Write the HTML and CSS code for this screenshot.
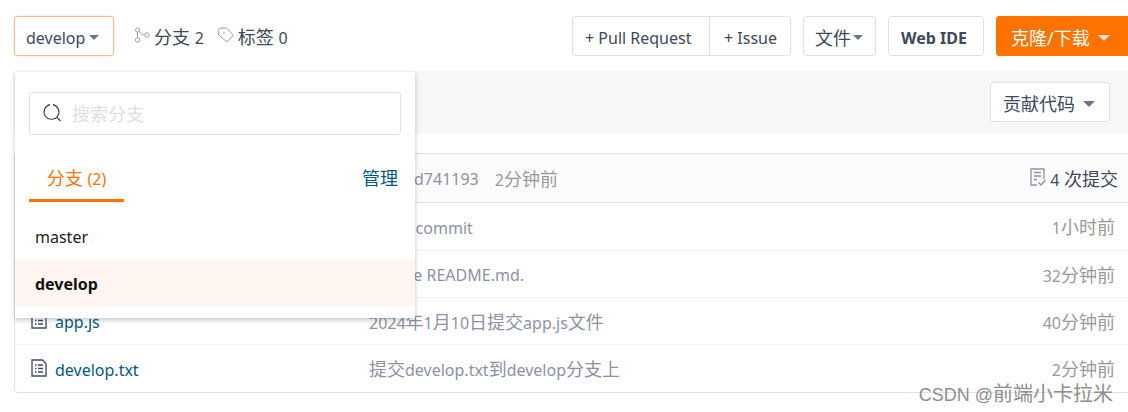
FILE: index.html
```html
<!DOCTYPE html>
<html lang="zh-CN">
<head>
<meta charset="utf-8">
<title>develop 分支</title>
<link rel="stylesheet" href="styles.css">
</head>
<body>
<main class="repo">
  <header class="toolbar">
    <div class="branch-picker">
      <button class="btn btn-branch" type="button" aria-expanded="true"><span class="latin">develop</span><span class="caret"></span></button>
      <section class="branch-menu" aria-label="选择分支">
        <div class="search">
          <svg class="search-icon" viewBox="0 0 20 20" aria-hidden="true"><path d="M8 1.600A7.400 7.400 0 1 0 11 1.600M14.500 14L18.500 18"/></svg>
          <input class="search-input" type="text" placeholder="搜索分支" aria-label="搜索分支">
        </div>
        <div class="menu-tabs">
          <button class="tab" type="button">分支 <span class="latin">(2)</span></button>
          <a class="manage" href="#">管理</a>
        </div>
        <ul class="branch-list">
          <li><a class="branch" href="#">master</a></li>
          <li><a class="branch branch-current" href="#">develop</a></li>
        </ul>
      </section>
    </div>
    <nav class="refs">
      <a class="ref" href="#"><svg class="ref-icon" viewBox="0 0 16 16" aria-hidden="true"><circle cx="3.5" cy="3" r="2"/><circle cx="3.5" cy="13" r="2.2"/><circle cx="13" cy="8" r="2.2"/><path d="M3.5 5v5.800M5 4.400c2 2 3 3.400 5.800 3.600"/></svg><span>分支 <span class="latin">2</span></span></a>
      <a class="ref" href="#"><svg class="ref-icon" viewBox="0 0 16 16" aria-hidden="true"><path d="M.7 3.300Q.7 1 3 1H8.500L15.300 8.200 9 15 .7 8z"/><circle class="dot" cx="6" cy="6" r=".8"/></svg><span>标签 <span class="latin">0</span></span></a>
    </nav>
    <div class="actions">
      <div class="btn-group">
        <button class="btn btn-pull latin" type="button">+ Pull Request</button>
        <button class="btn btn-issue latin" type="button">+ Issue</button>
      </div>
      <button class="btn btn-file" type="button">文件<span class="caret"></span></button>
      <button class="btn btn-ide latin" type="button">Web IDE</button>
      <button class="btn btn-clone" type="button">克隆/下载<span class="caret"></span></button>
    </div>
  </header>

  <div class="contribute-bar">
    <button class="btn btn-contribute" type="button">贡献代码<span class="caret"></span></button>
  </div>

  <section class="files">
    <div class="last-commit">
      <a class="hash latin" href="#">d741193</a>
      <span class="ago"><span class="latin">2</span>分钟前</span>
      <a class="commits" href="#"><svg class="commits-icon" viewBox="0 0 16 18" aria-hidden="true"><path d="M7 17H1V1H14V11M4 4.500h7M4 8h7M4 11.500h3M8.500 14.500l2.500 2.500 4.500-5"/></svg><span><span class="latin">4</span> 次提交</span></a>
    </div>
    <table class="file-table">
      <tbody>
        <tr><td class="name"></td><td class="message latin">Initial commit</td><td class="time"><span class="latin">1</span>小时前</td></tr>
        <tr><td class="name"></td><td class="message latin">update README.md.</td><td class="time"><span class="latin">32</span>分钟前</td></tr>
        <tr>
          <td class="name"><a class="file latin" href="#"><svg class="file-icon" viewBox="0 0 16 18" aria-hidden="true"><path d="M1 1H11.500L15 4.500V17H1zM4 6h1.500M4 9.500h1.500M4 13h1.500M7 6h5M7 9.500h5M7 13h5"/></svg>app.js</a></td>
          <td class="message"><span class="latin">2024</span>年<span class="latin">1</span>月<span class="latin">10</span>日提交<span class="latin">app.js</span>文件</td>
          <td class="time"><span class="latin">40</span>分钟前</td>
        </tr>
        <tr>
          <td class="name"><a class="file latin" href="#"><svg class="file-icon" viewBox="0 0 16 18" aria-hidden="true"><path d="M1 1H11.500L15 4.500V17H1zM4 6h1.500M4 9.500h1.500M4 13h1.500M7 6h5M7 9.500h5M7 13h5"/></svg>develop.txt</a></td>
          <td class="message">提交<span class="latin">develop.txt</span>到<span class="latin">develop</span>分支上</td>
          <td class="time"><span class="latin">2</span>分钟前</td>
        </tr>
      </tbody>
    </table>
    <div class="watermark"><span class="watermark-site">CSDN @</span>前端小卡拉米</div>
  </section>
</main>
</body>
</html>
```
FILE: styles.css
```css
* { box-sizing: border-box; }

body {
  margin: 0;
  background: #fff;
  color: #40485b;
  font: 18px/24px "Noto Sans", "Noto Sans CJK SC", sans-serif;
  font-weight: 400;
}

a { color: inherit; text-decoration: none; }
button, input { font: inherit; color: inherit; }
svg { fill: none; stroke: currentColor; flex: none; }

.latin { font-size: 16px; }

.repo { padding: 16px 0 16px 14px; }

.toolbar { display: flex; align-items: center; }

.btn {
  display: inline-flex;
  align-items: center;
  height: 40px;
  padding: 3px 12px 0;
  border: 1px solid #dce3e8;
  border-radius: 3px;
  background: #fff;
  white-space: nowrap;
}

.caret {
  margin-left: 4px;
  border: 5px solid transparent;
  border-top: 5px solid #6b7489;
  border-bottom: 0;
}

.branch-picker { position: relative; }

.btn-branch {
  width: 100px;
  padding: 3px 11px 0;
  border-color: #ffb980;
  box-shadow: 0 0 3px #dce3e8;
}

.branch-menu {
  position: absolute;
  z-index: 2;
  top: 56px;
  left: 1px;
  width: 400px;
  padding: 20px 0 11px;
  background: #fff;
  box-shadow: 0 2px 5px rgba(34, 36, 38, .25);
}

.search {
  display: flex;
  align-items: center;
  gap: 10px;
  height: 43px;
  margin: 0 14px;
  padding: 0 12px;
  border: 1px solid #dfe2e8;
  border-radius: 3px;
}

.search-icon { width: 20px; height: 20px; margin-bottom: 2px; color: #444; stroke-width: 1.2; }

.search-input {
  flex: 1;
  min-width: 0;
  padding: 0;
  border: 0;
  outline: 0;
  background: none;
}

.search-input::placeholder { color: #dedede; opacity: 1; }

.menu-tabs {
  display: flex;
  align-items: flex-start;
  justify-content: space-between;
  margin: 20px 17px 10px 14px;
}

.tab {
  height: 47px;
  width: 95px;
  padding: 2px 0 0;
  border: 0;
  border-bottom: 3px solid #fe7300;
  background: none;
  color: #fe7300;
}

.manage { padding: 11px 0 0; color: #005980; }

.branch-list { margin: 0; padding: 0; list-style: none; }

.branch {
  display: block;
  height: 47px;
  padding: 13px 20px 0;
  color: #222;
  font-size: 16px;
}

.branch-current {
  height: 48px;
  background: #fff6f1;
  color: #111;
  font-weight: 700;
}

.refs { display: flex; gap: 14px; margin-left: 20px; padding-top: 2px; }
.ref { display: flex; align-items: center; gap: 4px; }
.ref-icon { width: 16px; height: 16px; margin-bottom: 4px; color: #979eb0; }
.dot { fill: currentColor; stroke: none; }

.actions { display: flex; gap: 12px; margin-left: auto; }
.btn-group { display: flex; }
.btn-pull { width: 138px; border-radius: 3px 0 0 3px; }
.btn-issue { width: 82px; margin-left: -1px; padding: 3px 0 0 14px; border-radius: 0 3px 3px 0; }
.btn-file { width: 73px; padding: 3px 0 0 11px; }
.btn-file .caret { margin-left: 2px; }
.btn-ide { width: 96px; font-weight: 700; }

.btn-clone {
  width: 132px;
  padding: 3px 14px 0;
  border-color: #fe7300;
  border-radius: 3px 0 0 3px;
  background: #fe7300;
  color: #fff;
}

.btn-clone .caret { margin-left: 8px; border-width: 6px 6px 0; border-top-color: #ffe0c4; }

.contribute-bar {
  display: flex;
  justify-content: flex-end;
  margin-top: 15px;
  padding: 11px 18px 11px 0;
  background: #f7f7f7;
}

.btn-contribute { width: 120px; }
.btn-contribute .caret { margin-left: 8px; border-width: 6px 6px 0; }

.files {
  position: relative;
  margin-top: 20px;
  border: 1px solid #dce3e8;
  border-right: 0;
  border-radius: 4px 0 0 4px;
}

.last-commit {
  display: flex;
  align-items: center;
  gap: 16px;
  height: 49px;
  padding: 2px 10px 0 399px;
  border-bottom: 1px solid #dce3e8;
  background: #fcfcfc;
}

.hash { color: #8c92a4; }
.ago { color: #999; }
.commits { display: flex; align-items: center; gap: 4px; margin-left: auto; }
.commits-icon { width: 16px; height: 18px; margin-bottom: 4px; color: #8c92a4; stroke-width: 1.3; }

.file-table { width: 100%; border-collapse: collapse; table-layout: fixed; }
.file-table tr + tr { border-top: 1px solid #f0f3f6; }
.file-table td { height: 47px; padding: 3px 0 0; white-space: nowrap; }
.file-table tr:last-child td { height: 48px; }
.file-table .name { width: 354px; padding-left: 16px; }
.message { color: #8c92a4; }
.file-table .time { width: 120px; padding-right: 13px; color: #999; text-align: right; }

.file { display: flex; align-items: center; gap: 8px; color: #005980; }
.file-icon { width: 16px; height: 18px; margin-bottom: 4px; color: #40485b; stroke-width: 1.3; }

.watermark {
  position: absolute;
  right: 15px;
  bottom: -15px;
  color: #8e8e8e;
  font: 20px/24px "Liberation Sans", "Noto Sans CJK SC", sans-serif;
}

.watermark-site { font-size: 18px; }
```
